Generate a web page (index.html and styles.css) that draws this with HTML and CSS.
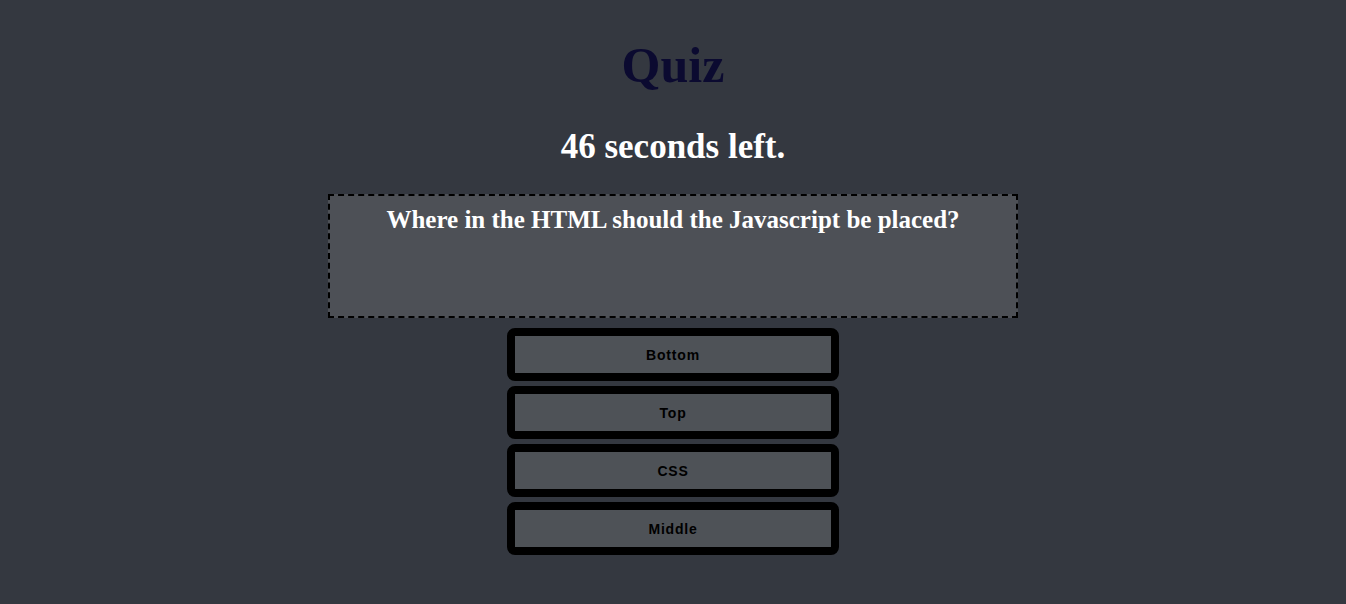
FILE: index.html
```html
<!DOCTYPE html>
<html>
<head>
<meta charset="utf-8">
<link rel="stylesheet" href="styles.css">
</head>
<body>
<main class="quiz">
  <h1 class="title">Quiz</h1>
  <h2 class="timer">46 seconds left.</h2>
  <section class="question">
    <h3 class="question-text">Where in the HTML should the Javascript be placed?</h3>
  </section>
  <div class="answers">
    <button class="answer">Bottom</button>
    <button class="answer">Top</button>
    <button class="answer">CSS</button>
    <button class="answer">Middle</button>
  </div>
</main>
</body>
</html>
```

FILE: styles.css
```css
html, body {
  margin: 0;
  padding: 0;
  background: #343840;
  height: 100%;
}
body {
  font-family: "Liberation Serif", "Times New Roman", serif;
}
.quiz {
  display: flex;
  flex-direction: column;
  align-items: center;
  padding-top: 37px;
}
.title {
  margin: 0;
  font-size: 50px;
  line-height: 56px;
  font-weight: bold;
  color: #0b0a30;
}
.timer {
  margin: 34px 0 0;
  font-size: 35px;
  line-height: 40px;
  font-weight: bold;
  color: #ffffff;
}
.question {
  margin-top: 27px;
  box-sizing: border-box;
  width: 690px;
  height: 124px;
  border: 2px dashed #000;
  background: #4d5056;
  padding-top: 10px;
  text-align: center;
}
.question-text {
  margin: 0;
  font-size: 25px;
  line-height: 28px;
  font-weight: bold;
  color: #ffffff;
}
.answers {
  margin-top: 10px;
  display: flex;
  flex-direction: column;
  gap: 5px;
}
.answer {
  box-sizing: border-box;
  width: 332px;
  height: 53px;
  border: 8px solid #000;
  border-radius: 8px;
  background: #4e5257;
  color: #000;
  font-family: "Liberation Sans", Arial, sans-serif;
  font-size: 14px;
  font-weight: bold;
  letter-spacing: 0.8px;
  padding: 0;
}
```
